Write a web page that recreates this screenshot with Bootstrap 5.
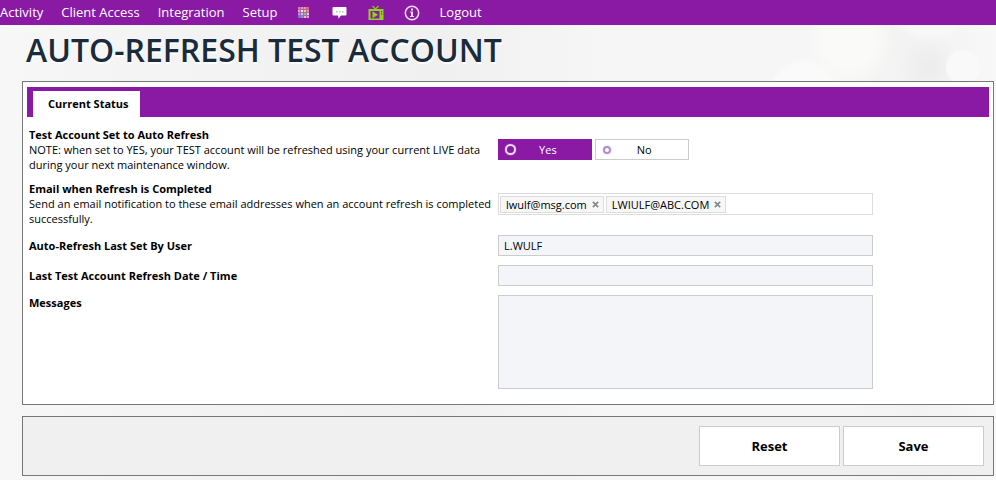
<!DOCTYPE html>
<html lang="en">
<head>
<meta charset="utf-8">
<meta name="viewport" content="width=device-width, initial-scale=1">
<title>Auto-Refresh Test Account</title>
<link href="https://cdn.jsdelivr.net/npm/bootstrap@5.3.0/dist/css/bootstrap.min.css" rel="stylesheet">
<style>
:root { --brand: #8a1aa3; --line: #ccc; --frame: #777; --field: #f4f5f8; }
body {
  font-family: "Open Sans", "Noto Sans", sans-serif; font-size: 11px; line-height: 15px; color: #000;
  background:
    radial-gradient(circle at 963px 67px, #f9f9f9 0 16px, transparent 18px),
    radial-gradient(circle at 930px 66px, #ececec 0, transparent 30px),
    radial-gradient(circle at 930px 0, #f8f8f8 0 34px, transparent 44px),
    radial-gradient(circle at 804px 94px, #fafafa 0 30px, transparent 36px),
    radial-gradient(circle at 850px 42px, #fafaf8 0 24px, transparent 44px),
    linear-gradient(90deg, #f7f7f7 0, #f3f3f3 20%, #f0f0f0 45%, #f6f6f6 60%, #f6f6f6 84%, #f2f2f2 92%, #f8f8f8 100%);
}
.top-nav { background: var(--brand); height: 25px; gap: 18px; font-size: 13px; line-height: 25px; overflow: hidden; }
.top-nav a { color: #fff; text-decoration: none; white-space: nowrap; }
.icon-set { gap: 20px; padding-right: 2px; }
.icon-set a { display: flex; width: 16px; justify-content: center; }
.page-title { font-size: 32px; line-height: 40px; font-weight: 600; color: #1a2b3c; text-shadow: 1px 2px 0 #fff; padding: 5px 4px 11px; margin: 0; }
.page-body { padding: 0 2px 4px 22px; }
.panel { border: 1px solid var(--frame); }
.panel-main { background: #fff; padding: 5px 4px 15px; margin-bottom: 11px; }
.tab-strip { background: var(--brand); padding: 4px 6px 0; margin-bottom: 10px; border: 0; }
.tab-strip .nav-link { background: #fff; color: #000; font-weight: 700; border: 0; border-radius: 0; padding: 5px 11px 6px 15px; margin: 0; }
.form-rows { gap: 9px; padding-left: 2px; }
.form-line { display: grid; grid-template-columns: 469fr 375fr 116fr; align-items: center; }
.line-top { align-items: start; }
.form-line > :first-child { padding-right: 3px; }
.form-line .title { font-weight: 700; display: block; }
.field { font-size: 11px; line-height: 15px; min-height: 21px; padding: 2px 5px; border: 1px solid var(--line); border-radius: 0; background: var(--field) !important; color: #000; }
textarea.field { height: 94px; resize: none; }
.choice { gap: 3px; }
.choice label { width: 25%; height: 21px; border: 1px solid var(--line); background: #fff; display: flex; align-items: center; padding-left: 6px; }
.choice label:has(input:checked) { background: var(--brand); border-color: var(--brand); color: #fff; }
.choice span { flex: 1; text-align: center; padding-right: 11px; }
.choice input { appearance: none; width: 8px; height: 8px; margin: 0 1px; border: 2px solid #b08ad6; border-radius: 50%; box-shadow: 0 0 1px 1px #eee; }
.choice input:checked { width: 11px; height: 11px; margin: 0; border-color: #f0dcf5; box-shadow: 0 0 1px #f0dcf5; }
.tag-box { border: 1px solid #ddd; background: #fff; height: 22px; padding: 2px 1px; gap: 2px; }
.tag { display: flex; align-items: center; height: 17px; border: 1px solid #ddd; background: #f7f7f7; padding: 0 4px 0 5px; gap: 5px; white-space: nowrap; }
.tag button { border: 0; background: none; padding: 0; display: flex; }
.panel-actions { background: #f0f0f0; padding: 9px; gap: 3px; }
.panel-actions .btn { width: 141px; height: 40px; border: 1px solid var(--line); border-radius: 0; background: #fff; color: #000; font-size: 13px; line-height: 20px; font-weight: 700; }
</style>
</head>
<body>
<nav class="top-nav d-flex align-items-center">
  <a href="#">Activity</a>
  <a href="#">Client Access</a>
  <a href="#">Integration</a>
  <a href="#">Setup</a>
  <div class="icon-set d-flex align-items-center">
    <a href="#" aria-label="Apps"><svg width="13" height="13" viewBox="0 0 13 13">
      <path fill="#b565b5" d="M1 1h11v11H1z"/>
      <path fill="#ef7f75" d="M1 1h2v2H1z"/><path fill="#ee8fae" d="M4 1h2v2H4z"/><path fill="#f3a052" d="M7 1h2v2H7z"/><path fill="#ee6672" d="M10 1h2v2h-2z"/>
      <path fill="#e7a4dc" d="M1 4h2v2H1z"/><path fill="#f7e3ee" d="M4 4h2v2H4z"/><path fill="#f5c6a0" d="M7 4h2v2H7z"/><path fill="#f28b93" d="M10 4h2v2h-2z"/>
      <path fill="#8fa0ee" d="M1 7h2v2H1z"/><path fill="#9cd8e8" d="M4 7h2v2H4z"/><path fill="#62dd60" d="M7 7h2v2H7z"/><path fill="#e5d5a5" d="M10 7h2v2h-2z"/>
      <path fill="#5a83cc" d="M1 10h2v2H1z"/><path fill="#62a5c8" d="M4 10h2v2H4z"/><path fill="#f0b8cc" d="M7 10h2v2H7z"/><path fill="#f5a0c0" d="M10 10h2v2h-2z"/></svg></a>
    <a href="#" aria-label="Chat"><svg width="15" height="13" viewBox="0 0 15 13"><path fill="#fff" d="M1.500 1h12q1 0 1 1v6.500q0 1-1 1H9L6.500 12.800 6 9.500H1.500q-1 0-1-1V2q0-1 1-1z"/><path fill="#c9b3d4" d="M4 5h1.500v1.500H4zM7 5h1.500v1.500H7zM10 5h1.500v1.500H10z"/></svg></a>
    <a href="#" aria-label="Videos"><svg width="16" height="16" viewBox="0 0 16 16"><path fill="none" stroke="#8fc31f" stroke-width="1.300" d="M4.500 1 7.500 4 10.500 1"/><path fill="#8fd31f" fill-rule="evenodd" d="M.5 4h15v11H.5zM2.500 6v7.500h9V6zM13 6v1.200h1.200V6zM13 8.200v1.200h1.200V8.200z"/><path fill="#8fd31f" d="M4.500 6.300 10 9.700 4.500 13.200z"/></svg></a>
    <a href="#" aria-label="Information"><svg width="16" height="16" viewBox="0 0 16 16"><circle cx="8" cy="8" r="6.700" fill="none" stroke="#f1e2f5" stroke-width="1.500"/><path fill="#f1e2f5" d="M7 3.500h2v2H7zM6 6.500h3v4.500h1v1H6v-1h1V7.500H6z"/></svg></a>
  </div>
  <a href="#">Logout</a>
</nav>
<main class="page-body">
  <h1 class="page-title text-uppercase">Auto-Refresh Test Account</h1>
  <form>
    <section class="panel panel-main">
      <ul class="nav nav-tabs tab-strip">
        <li class="nav-item"><a class="nav-link active" href="#">Current Status</a></li>
      </ul>
      <div class="form-rows d-flex flex-column">
        <div class="form-line">
          <div id="autoText"><strong class="title">Test Account Set to Auto Refresh</strong>NOTE: when set to YES, your TEST account will be refreshed using your current LIVE data during your next maintenance window.</div>
          <div class="choice d-flex" role="radiogroup" aria-labelledby="autoText">
            <label><input type="radio" name="auto" checked><span>Yes</span></label>
            <label><input type="radio" name="auto"><span>No</span></label>
          </div>
        </div>
        <div class="form-line">
          <div id="mailText"><strong class="title">Email when Refresh is Completed</strong>Send an email notification to these email addresses when an account refresh is completed successfully.</div>
          <div class="tag-box d-flex" role="group" aria-labelledby="mailText">
            <span class="tag">lwulf@msg.com <button type="button" aria-label="Remove lwulf@msg.com"><svg width="7" height="7" viewBox="0 0 8 8"><path stroke="#888" stroke-width="2" d="m1 1 6 6M7 1 1 7"/></svg></button></span>
            <span class="tag">LWIULF@ABC.COM <button type="button" aria-label="Remove LWIULF@ABC.COM"><svg width="7" height="7" viewBox="0 0 8 8"><path stroke="#888" stroke-width="2" d="m1 1 6 6M7 1 1 7"/></svg></button></span>
          </div>
        </div>
        <div class="form-line">
          <label class="title" for="setBy">Auto-Refresh Last Set By User</label>
          <input class="form-control field" id="setBy" type="text" value="L.WULF" readonly>
        </div>
        <div class="form-line">
          <label class="title" for="lastRun">Last Test Account Refresh Date / Time</label>
          <input class="form-control field" id="lastRun" type="text" readonly>
        </div>
        <div class="form-line line-top">
          <label class="title" for="messages">Messages</label>
          <textarea class="form-control field" id="messages" readonly></textarea>
        </div>
      </div>
    </section>
    <section class="panel panel-actions d-flex justify-content-end">
      <button class="btn" type="reset">Reset</button>
      <button class="btn" type="submit">Save</button>
    </section>
  </form>
</main>
<script src="https://cdn.jsdelivr.net/npm/bootstrap@5.3.0/dist/js/bootstrap.bundle.min.js"></script>
</body>
</html>
